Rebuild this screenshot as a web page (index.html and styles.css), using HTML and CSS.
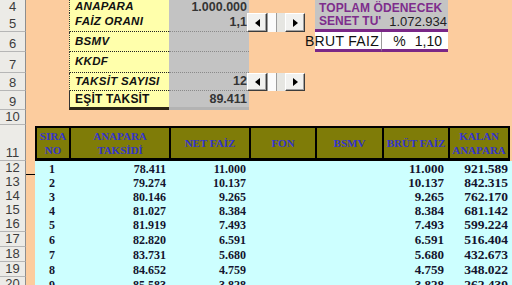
FILE: index.html
```html
<!DOCTYPE html>
<html lang="tr">

<head>
    <meta charset="utf-8">
    <title>Kredi Hesaplama</title>
    <link rel="stylesheet" href="styles.css">
</head>

<body>
    <div class="sheet">
        <!-- giris alanlari -->
        <div class="row h13">
            <div class="rh">4</div>
            <div class="lbl at-d">ANAPARA</div>
            <div class="val">1.000.000</div>
            <div class="tot at-g">TOPLAM ÖDENECEK</div>
        </div>
        <div class="row h19">
            <div class="rh">5</div>
            <div class="lbl at-d">FAİZ ORANI</div>
            <div class="val">1,1</div>
            <div class="spin">
                <span class="btn prev"></span>
                <span class="thumb"></span>
                <span class="track"></span>
                <span class="btn next"></span>
            </div>
            <div class="senet">SENET TU'</div>
            <div class="senet-val">1.072.934</div>
        </div>
        <div class="row h20">
            <div class="rh">6</div>
            <div class="lbl at-d">BSMV</div>
            <div class="val"></div>
            <div class="brut at-g">BRUT FAIZ</div>
            <div class="brut-val"><span>%</span><span>1,10</span></div>
        </div>
        <div class="row h21">
            <div class="rh">7</div>
            <div class="lbl at-d">KKDF</div>
            <div class="val"></div>
        </div>
        <div class="row h18">
            <div class="rh">8</div>
            <div class="lbl at-d">TAKSİT SAYISI</div>
            <div class="val">12</div>
            <div class="spin">
                <span class="btn prev"></span>
                <span class="thumb"></span>
                <span class="track"></span>
                <span class="btn next"></span>
            </div>
        </div>
        <div class="row h19">
            <div class="rh">9</div>
            <div class="lbl result at-d">EŞİT TAKSİT</div>
            <div class="val result">89.411</div>
        </div>
        <div class="row h15">
            <div class="rh">10</div>
        </div>

        <!-- odeme plani -->
        <div class="row h36">
            <div class="rh">11</div>
            <div class="th at-c">SIRA<br>NO</div>
            <div class="th">ANAPARA<br>TAKSİDİ</div>
            <div class="th">NET FAİZ</div>
            <div class="th">FON</div>
            <div class="th">BSMV</div>
            <div class="th">BRÜT FAİZ</div>
            <div class="th last">KALAN<br>ANAPARA</div>
        </div>
        <div class="row h14 first">
            <div class="rh">12</div>
            <div class="td ctr at-c">1</div>
            <div class="td">78.411</div>
            <div class="td">11.000</div>
            <div class="td"></div>
            <div class="td"></div>
            <div class="td big">11.000</div>
            <div class="td big end">921.589</div>
        </div>
        <div class="row h14">
            <div class="rh">13</div>
            <div class="td ctr at-c">2</div>
            <div class="td">79.274</div>
            <div class="td">10.137</div>
            <div class="td"></div>
            <div class="td"></div>
            <div class="td big">10.137</div>
            <div class="td big end">842.315</div>
        </div>
        <div class="row h14">
            <div class="rh">14</div>
            <div class="td ctr at-c">3</div>
            <div class="td">80.146</div>
            <div class="td">9.265</div>
            <div class="td"></div>
            <div class="td"></div>
            <div class="td big">9.265</div>
            <div class="td big end">762.170</div>
        </div>
        <div class="row h14">
            <div class="rh">15</div>
            <div class="td ctr at-c">4</div>
            <div class="td">81.027</div>
            <div class="td">8.384</div>
            <div class="td"></div>
            <div class="td"></div>
            <div class="td big">8.384</div>
            <div class="td big end">681.142</div>
        </div>
        <div class="row h15">
            <div class="rh">16</div>
            <div class="td ctr at-c">5</div>
            <div class="td">81.919</div>
            <div class="td">7.493</div>
            <div class="td"></div>
            <div class="td"></div>
            <div class="td big">7.493</div>
            <div class="td big end">599.224</div>
        </div>
        <div class="row h15">
            <div class="rh">17</div>
            <div class="td ctr at-c">6</div>
            <div class="td">82.820</div>
            <div class="td">6.591</div>
            <div class="td"></div>
            <div class="td"></div>
            <div class="td big">6.591</div>
            <div class="td big end">516.404</div>
        </div>
        <div class="row h15">
            <div class="rh">18</div>
            <div class="td ctr at-c">7</div>
            <div class="td">83.731</div>
            <div class="td">5.680</div>
            <div class="td"></div>
            <div class="td"></div>
            <div class="td big">5.680</div>
            <div class="td big end">432.673</div>
        </div>
        <div class="row h15">
            <div class="rh">19</div>
            <div class="td ctr at-c">8</div>
            <div class="td">84.652</div>
            <div class="td">4.759</div>
            <div class="td"></div>
            <div class="td"></div>
            <div class="td big">4.759</div>
            <div class="td big end">348.022</div>
        </div>
        <div class="row h14">
            <div class="rh">20</div>
            <div class="td ctr at-c">9</div>
            <div class="td">85.583</div>
            <div class="td">3.828</div>
            <div class="td"></div>
            <div class="td"></div>
            <div class="td big">3.828</div>
            <div class="td big end">262.439</div>
        </div>
    </div>
</body>

</html>
```

FILE: styles.css
```css
* {
    box-sizing: border-box;
}

body {
    margin: 0;
    background-color: #fccc9e;
    font-family: "Liberation Sans", Arial, sans-serif;
    overflow: hidden;
}

.sheet {
    width: 512px;
}

/* every row uses the same excel columns A..I */
.row {
    display: grid;
    grid-template-columns: 26px 9px 34px 100px 80px 66px 67px 66px 64px;
}

.h13 { height: 13px; }
.h14 { height: 14px; }
.h15 { height: 15px; }
.h18 { height: 18px; }
.h19 { height: 19px; }
.h20 { height: 20px; }
.h21 { height: 21px; }
.h36 { height: 36px; }

.at-c { grid-column: 3; }
.at-d { grid-column: 4; }
.at-g { grid-column: 7; }

.row > div {
    display: flex;
    align-items: center;
    white-space: nowrap;
    line-height: 1;
}

/* row numbers */
.rh {
    grid-column: 1;
    justify-content: center;
    align-items: flex-end !important;
    padding-bottom: 1px;
    background: #ecebe7;
    border-right: 1px solid #8e8e8e;
    border-bottom: 1px solid #b6b6b6;
    color: #3c3c3c;
    font-size: 13px;
}

/* input block */
.lbl {
    padding-left: 5px;
    background: #ffffab;
    border-left: 1px dotted #333;
    border-bottom: 1px dotted #222;
    font-size: 11.5px;
    font-weight: bold;
    font-style: italic;
    color: #111;
    letter-spacing: 0.3px;
}

.val {
    justify-content: flex-end;
    padding-right: 2px;
    background: #c3c3c3;
    border-bottom: 1px dotted #8a8a8a;
    font-size: 12.5px;
    font-weight: bold;
    color: #343434;
}

.lbl.result {
    font-style: normal;
    font-size: 12px;
    letter-spacing: 0.2px;
    border-left: 1px solid #333;
    border-bottom: 3px solid #2b2515;
}

.val.result {
    border-bottom: 3px solid #b3b3b3;
}

/* spinner (scroll bar control) */
.spin {
    grid-column: 6;
    width: 58px;
    margin-left: -2px;
    background: #ececea;
}

.spin span {
    display: block;
    height: 100%;
}

.spin .btn {
    width: 20px;
    display: flex;
    align-items: center;
    justify-content: center;
    background: #f1f1ef;
    border: 1px solid;
    border-color: #fff #3c3c3c #3c3c3c #fff;
    box-shadow: inset -1px -1px #a3a3a3;
}

.spin .btn::before {
    content: "";
    border-style: solid;
}

.spin .prev::before {
    border-width: 4px 5px 4px 0;
    border-color: transparent #000 transparent transparent;
}

.spin .next::before {
    border-width: 4px 0 4px 5px;
    border-color: transparent transparent transparent #000;
}

.spin .thumb {
    width: 10px;
    background: #fbfbfb;
    border-left: 1px solid #9c9c9c;
    border-right: 1px solid #9c9c9c;
}

.spin .track {
    flex: 1;
    background: #e6e6e2;
}

/* summary block */
.tot {
    grid-column: 7 / span 2 !important;
    padding-left: 4px;
    background: #c4c4c4;
    color: #7e2d8c;
    font-size: 12px;
    font-weight: bold;
    letter-spacing: 0.1px;
}

.senet {
    overflow: hidden;
    padding-left: 4px;
    background: #c4c4c4;
    border-bottom: 3px solid #7a2787;
    color: #7e2d8c;
    font-size: 12px;
    font-weight: bold;
}

.senet-val {
    justify-content: flex-end;
    padding-right: 1px;
    background: #c4c4c4;
    border-bottom: 3px solid #7a2787;
    color: #222;
    font-size: 13px;
}

.brut {
    justify-content: flex-end;
    padding-right: 2px;
    background: #fff;
    border-right: 1px solid #9a9a9a;
    border-bottom: 3px solid #7a2787;
    color: #111;
    font-size: 14px;
    letter-spacing: 0.3px;
}

.brut-val {
    justify-content: flex-end;
    gap: 9px;
    padding-right: 6px;
    background: #fff;
    border-bottom: 3px solid #7a2787;
    color: #111;
    font-size: 14px;
}

/* payment table */
.th {
    justify-content: center;
    text-align: center;
    margin-top: 1px;
    background: #7f7c08;
    border-top: 2px solid #000;
    border-bottom: 3px solid #000;
    border-left: 2px solid #000;
    color: #3434cc;
    font-family: "Liberation Serif", "Times New Roman", serif;
    font-size: 11px;
    font-weight: bold;
    line-height: 14px !important;
}

.th.last {
    border-right: 2px solid #000;
    margin-right: 2px;
}

.td {
    justify-content: flex-end;
    padding-right: 3px;
    background: #cdffff;
    color: #14142e;
    font-family: "Liberation Serif", "Times New Roman", serif;
    font-size: 12px;
    font-weight: bold;
}

.td.ctr {
    justify-content: center;
    padding-right: 0;
}

.td.big {
    font-size: 13px;
    padding-right: 4px;
}

.td.end {
    font-size: 13.5px;
    padding-right: 4px;
}

.row.first {
    border-bottom: 1px solid #000;
}
```
